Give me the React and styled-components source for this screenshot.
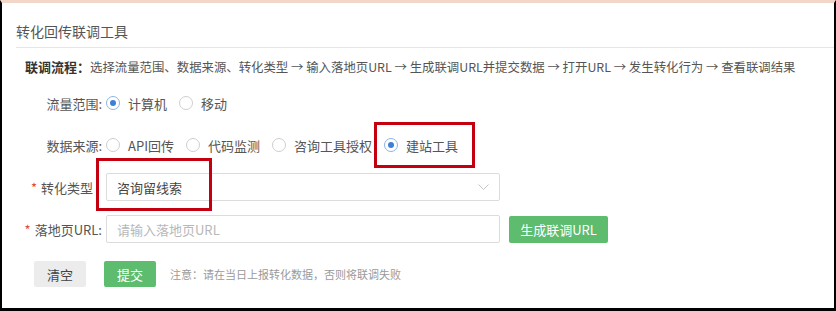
import React from "react";
import styled, { createGlobalStyle } from "styled-components";

const Global = createGlobalStyle`
  html, body { margin: 0; padding: 0; background: #fff; }
  body { font-family: "Noto Sans CJK SC", "Liberation Sans", sans-serif; }
  * { box-sizing: border-box; }
`;

const Frame = styled.div`
  position: relative;
  width: 836px;
  height: 311px;
  border-left: 2px solid #000;
  border-right: 2px solid #000;
  border-bottom: 3px solid #000;
  border-top: 3px solid #f2d6c8;
  padding-left: 14px;
  display: flex;
  flex-direction: column;
  color: #555;
  font-size: 13px;
  overflow: hidden;
`;

const Header = styled.div`
  padding-top: 16px;
  padding-bottom: 4px;
  border-bottom: 1px solid #e6e6e6;
`;

const Title = styled.h1`
  margin: 0;
  font-size: 14px;
  font-weight: 400;
  line-height: 24px;
  color: #555;
`;

const Flow = styled.p`
  margin: 9px 0 5px 9px;
  line-height: 20px;
  font-size: 12.4px;
  color: #555;
  white-space: nowrap;
`;

const FlowLabel = styled.b`
  color: #333;
  font-weight: 700;
  font-size: 13px;
`;

const Row = styled.div`
  display: flex;
  align-items: center;
  height: 42px;
`;

const Label = styled.label`
  width: 90px;
  text-align: right;
  padding-right: ${(p) => p.$pad ?? 4}px;
  color: #555;
  white-space: nowrap;
`;

const Star = styled.span`
  color: #e04a3a;
  margin-right: 4px;
`;

const RadioItem = styled.span`
  display: inline-flex;
  align-items: center;
  gap: 8px;
  margin-right: 12px;
  color: #555;
`;

const Circle = styled.span`
  width: 14px;
  height: 14px;
  border-radius: 50%;
  border: 1px solid ${(p) => (p.$on ? "#8fb4e6" : "#cfcfcf")};
  display: inline-flex;
  align-items: center;
  justify-content: center;
  background: #fff;
  &::after {
    content: "";
    width: 6px;
    height: 6px;
    border-radius: 50%;
    background: ${(p) => (p.$on ? "#3f7fd4" : "transparent")};
  }
`;

const Field = styled.div`
  width: 394px;
  height: 28px;
  border: 1px solid #dcdcdc;
  border-radius: 2px;
  display: flex;
  align-items: center;
  justify-content: space-between;
  padding: 0 10px 0 10px;
  color: ${(p) => (p.$placeholder ? "#b8b8b8" : "#444")};
  font-size: 13px;
  margin-right: 9px;
`;

const Btn = styled.button`
  height: ${(p) => p.$h || 26}px;
  width: ${(p) => p.$w || 52}px;
  padding: 0;
  border: none;
  border-radius: 2px;
  font-family: inherit;
  font-size: 13px;
  background: ${(p) => (p.$green ? "#5dbc6e" : "#ececec")};
  color: ${(p) => (p.$green ? "#fff" : "#444")};
  margin-right: ${(p) => p.$mr || 0}px;
`;

const Actions = styled.div`
  display: flex;
  align-items: center;
  height: 26px;
  margin-top: 11px;
  padding-left: 18px;
`;

const Note = styled.span`
  font-size: 11px;
  color: #9a9a9a;
`;

const Mark = styled.div`
  position: absolute;
  border: 3px solid #c40010;
  left: ${(p) => p.$x}px;
  top: ${(p) => p.$y}px;
  width: ${(p) => p.$w}px;
  height: ${(p) => p.$h}px;
`;

const Radio = ({ on, children }) => (
  <RadioItem>
    <Circle $on={on} />
    {children}
  </RadioItem>
);

const Chevron = () => (
  <svg width="11" height="6" viewBox="0 0 11 6" fill="none">
    <path d="M0.5 0.5 L5.5 5.5 L10.5 0.5" stroke="#c4c4c4" strokeWidth="1" />
  </svg>
);

export default function App() {
  return (
    <>
      <Global />
      <Frame>
        <Header>
          <Title>转化回传联调工具</Title>
        </Header>
        <Flow>
          <FlowLabel>联调流程：</FlowLabel>
          选择流量范围、数据来源、转化类型 → 输入落地页URL → 生成联调URL并提交数据 → 打开URL → 发生转化行为 → 查看联调结果
        </Flow>
        <Row>
          <Label>流量范围:</Label>
          <Radio on>计算机</Radio>
          <Radio>移动</Radio>
        </Row>
        <Row>
          <Label>数据来源:</Label>
          <Radio>API回传</Radio>
          <Radio>代码监测</Radio>
          <Radio>咨询工具授权</Radio>
          <Radio on>建站工具</Radio>
        </Row>
        <Row>
          <Label $pad={13}>
            <Star>*</Star>转化类型
          </Label>
          <Field>
            咨询留线索
            <Chevron />
          </Field>
        </Row>
        <Row>
          <Label>
            <Star>*</Star>落地页URL:
          </Label>
          <Field $placeholder>请输入落地页URL</Field>
          <Btn $green $h={27} $w={99}>生成联调URL</Btn>
        </Row>
        <Actions>
          <Btn $mr={18}>清空</Btn>
          <Btn $green $mr={14}>提交</Btn>
          <Note>注意：请在当日上报转化数据，否则将联调失败</Note>
        </Actions>
        <Mark $x={372} $y={119} $w={101} $h={46} />
        <Mark $x={94} $y={155} $w={116} $h={53} />
      </Frame>
    </>
  );
}
